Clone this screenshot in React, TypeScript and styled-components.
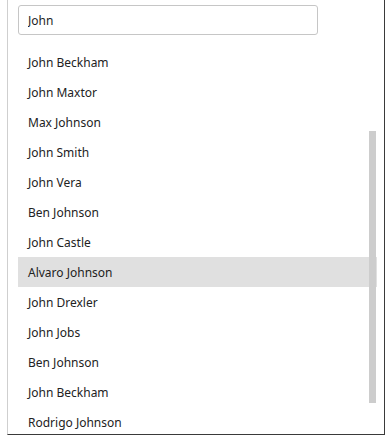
import styled, { createGlobalStyle } from "styled-components";

const GlobalStyle = createGlobalStyle`
    html, body {
        margin: 0;
        padding: 0;
        background: #ffffff;
    }
    body {
        font-family: "Noto Sans", "Open Sans", sans-serif;
        font-size: 12px;
        color: #222222;
    }
`;

const Panel = styled.div`
    box-sizing: border-box;
    margin-left: 7px;
    width: 378px;
    height: 435px;
    border-left: 1px solid #cfcfcf;
    border-right: 1px solid #3a3a3a;
    border-bottom: 1px solid #3a3a3a;
    padding: 5px 0 0 10px;
    overflow: hidden;
    display: flex;
    flex-direction: column;
`;

const SearchInput = styled.input`
    box-sizing: border-box;
    width: 300px;
    height: 30px;
    flex-shrink: 0;
    border: 1px solid #c6c6c6;
    border-radius: 3px;
    padding: 0 9px;
    font: inherit;
    color: #1e1e1e;
    outline: none;
`;

const List = styled.ul`
    position: relative;
    list-style: none;
    margin: 12px 0 0;
    padding: 0;
    width: 359px;
`;

const Item = styled.li<{ $active?: boolean }>`
    height: 30px;
    display: flex;
    align-items: center;
    padding-left: 10px;
    background: ${(p) => (p.$active ? "#e0e0e0" : "transparent")};
    white-space: nowrap;
`;

const Thumb = styled.div`
    position: absolute;
    right: 1px;
    top: 84px;
    width: 7px;
    height: 272px;
    background: #cdcdcd;
`;

const names = [
    "John Beckham",
    "John Maxtor",
    "Max Johnson",
    "John Smith",
    "John Vera",
    "Ben Johnson",
    "John Castle",
    "Alvaro Johnson",
    "John Drexler",
    "John Jobs",
    "Ben Johnson",
    "John Beckham",
    "Rodrigo Johnson",
];

export default function App() {
    return (
        <>
            <GlobalStyle />
            <Panel>
                <SearchInput defaultValue="John" />
                <List>
                    {names.map((name, i) => (
                        <Item key={i} $active={name === "Alvaro Johnson"}>
                            {name}
                        </Item>
                    ))}
                    <Thumb />
                </List>
            </Panel>
        </>
    );
}
